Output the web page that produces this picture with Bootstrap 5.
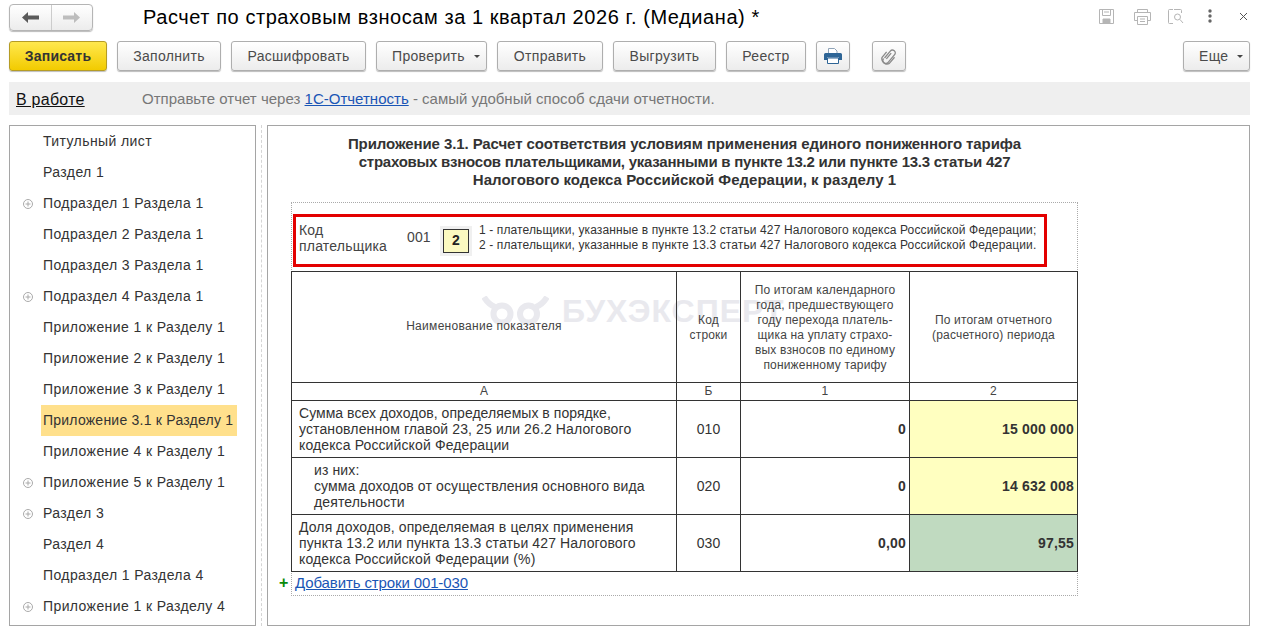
<!DOCTYPE html>
<html lang="ru">
<head>
<meta charset="utf-8">
<title>Расчет по страховым взносам</title>
<link href="https://cdn.jsdelivr.net/npm/bootstrap@5.3.0/dist/css/bootstrap.min.css" rel="stylesheet">
<style>
html,body{height:626px;overflow:hidden}
body{font-family:"Liberation Sans",Arial,sans-serif;font-size:14px;color:#333;background:#fff;padding:4px 13px 0 9px}
.head-row{height:26px;margin-bottom:11px}
.hist{width:84px;height:27px;border:1px solid #b5b5b5;border-radius:4px;background:linear-gradient(#fff,#ececec);box-shadow:0 1px 1px #bbb}
.hist span{flex:1;display:flex;align-items:center;justify-content:center}
.hist span+span{border-left:1px solid #ccc}
.doc-title{font-size:20px;line-height:26px;color:#000;margin-left:50px;letter-spacing:.57px}
.win-tools{margin-bottom:2px}
.tool-btn{height:30px;border:1px solid #aeaeae;border-radius:3px;background:linear-gradient(#fff,#ececec);box-shadow:0 1px 1px #bdbdbd;color:#4b4b4b;font-size:14px;letter-spacing:.32px;padding:0;display:flex;align-items:center;justify-content:center;flex:none;margin-left:10px}
.tool-btn.main-act{background:linear-gradient(#ffe84e,#f2cb00);border-color:#b59c25;color:#333;font-weight:700;width:98px;margin-left:0;letter-spacing:.2px}
.tool-btn.with-menu{justify-content:flex-start;padding-left:15px}
.caret-m{display:inline-block;width:0;height:0;border:3px solid transparent;border-top:3px solid #444;border-bottom:0;margin-left:9px}
.toolbar{height:30px;margin-bottom:11px}
.status-bar{height:33px;background:#efefef;padding:2px 0 0 7px;margin-bottom:10px}
.status-name{font-size:16px;color:#111;text-decoration:underline;width:126px;letter-spacing:.25px}
.status-note{color:#777;font-size:15px;letter-spacing:.01px;margin-top:-1px}
.status-note a,.add-link{color:#1a55b5}
.panels{height:501px}
.side{width:247px;border:1px solid #a5a5a5;flex:none;overflow:hidden}
.side-list{margin:0;padding:0;list-style:none}
.side-list li{height:31px;display:flex;align-items:center;padding-left:10px}
.tree-mark{width:12px;height:12px;flex:none;margin-left:2px;margin-right:9px}
.tree-gap{width:23px;flex:none}
.lbl{padding:0 4px 0 2px;height:31px;line-height:30px;margin-left:-2px;white-space:nowrap;color:#333;letter-spacing:.4px}
.lbl.sel{background:#ffe08c;letter-spacing:.23px}
.split{width:11px;flex:none;position:relative}
.split::after{content:"";position:absolute;left:5px;top:0;bottom:0;border-left:1px dashed #d5d5d5}
.sheet{flex:1;border:1px solid #a5a5a5;position:relative;overflow:hidden;padding:9px 0 0 23px}
.sheet-title{width:787px;font-weight:700;font-size:15px;letter-spacing:-.09px;text-align:center;line-height:18px;color:#333;margin-bottom:13px}
.sheet-title .ln-b{letter-spacing:-.25px}
.sheet-title .ln-c{letter-spacing:.02px}
.form-box{width:787px;height:394px;border:1px dotted #aaa;padding-top:11px;position:relative}
.red-box{width:754px;height:53px;border:3px solid #e30000;margin:0 0 4px 1px;display:flex;align-items:center;padding:0 0 6px 3px}
.payer{width:108px;line-height:16px;color:#444;letter-spacing:.2px}
.code-val{width:33px;color:#444;letter-spacing:.15px}
.cell-wrap{width:32px;height:30px;background:#f0f0f0;display:flex;align-items:center;justify-content:center;margin-right:7px;margin-top:6px}
.cell-wrap b{width:26px;height:24px;border:1px solid #333;background:#fbf9c0;display:flex;align-items:center;justify-content:center;font-size:14px;color:#222}
.notes{font-size:12px;line-height:15px;color:#333;white-space:nowrap;letter-spacing:.12px}
.report{width:786px;border-collapse:collapse;table-layout:fixed;position:relative;z-index:1;margin-left:-1px}
.report td{border:1px solid #333;padding:0 3px;text-align:center;vertical-align:middle;color:#444;font-size:12px;line-height:15px;background:transparent;letter-spacing:.18px}
.report td.head-cell{padding-top:2px}
.report td.head-name{padding-bottom:1px;letter-spacing:.3px}
.report tr.body-row td{font-size:14px;line-height:16px;height:57px;color:#333;letter-spacing:.12px}
.report tr.letters td{height:18px}
.report td.name{text-align:left;padding-left:7px}
.report td.name.ind{padding-left:22px}
.report tr.body-row td.num{text-align:right;font-weight:700;letter-spacing:.2px}
.report td.cell-y{background:#ffffc0}
.report td.cell-g{background:#c0dac0}
.tight-ln{letter-spacing:.04px}
.add-row{height:23px;line-height:22px;padding-left:3px}
.plus-sign{position:absolute;left:-13px;bottom:2px;color:#0a8a0a;font-weight:700;font-size:16px;line-height:20px}
.add-link{font-size:15px;letter-spacing:-.12px}
.wmark{position:absolute;left:190px;top:90px;z-index:0;color:#e9e9ee;font-size:32px;font-weight:700;display:flex;align-items:center;gap:13px;line-height:36px;pointer-events:none;letter-spacing:1px;white-space:nowrap}
</style>
</head>
<body>
<div class="d-flex align-items-center head-row">
  <div class="hist d-flex flex-none">
    <span><svg width="17" height="11" viewBox="0 0 17 11"><path d="M0 5.500 6 0v3.500h11v4H6V11z" fill="#5a5a5a"/></svg></span>
    <span><svg width="17" height="11" viewBox="0 0 17 11"><path d="M17 5.500 11 0v3.500H0v4h11V11z" fill="#bdbdbd"/></svg></span>
  </div>
  <div class="doc-title">Расчет по страховым взносам за 1 квартал 2026 г. (Медиана) *</div>
  <div class="ms-auto d-flex align-items-center win-tools">
    <svg width="17" height="17" viewBox="0 0 17 17" fill="none" stroke="#b5b5b5"><path d="M1.500 1.500h14v14h-14z"/><path d="M4.500 1.500v6h8v-6"/><path d="M6 4h5"/><path d="M5 11h7v4.500H5z" fill="#b5b5b5"/></svg>
    <svg style="margin-left:18px" width="19" height="17" viewBox="0 0 19 17" fill="none" stroke="#b5b5b5"><path d="M4.500 4.500v-3h10v3M1.500 4.500h16v8h-3M1.500 4.500v8h3"/><path d="M4.500 8.500h10v8h-10zM7 11h5M7 13.500h5"/></svg>
    <svg style="margin-left:15px" width="18" height="17" viewBox="0 0 18 17" fill="none" stroke="#b5b5b5"><path d="M6 1.500H2.500q-1 0-1 1v12q0 1 1 1H6M7 1.500h6.500q1 0 1 1V5"/><circle cx="10.500" cy="9" r="3"/><path d="m13 11.500 3 3.500"/></svg>
    <svg style="margin-left:23px" width="4" height="14" viewBox="0 0 4 14" fill="#666"><circle cx="2" cy="2" r="1.700"/><circle cx="2" cy="7" r="1.700"/><circle cx="2" cy="12" r="1.700"/></svg>
    <svg style="margin-left:27px;margin-right:2px" width="9" height="9" viewBox="0 0 9 9" stroke="#555" fill="none"><path d="m1 1 7 7M8 1 1 8"/></svg>
  </div>
</div>
<div class="d-flex toolbar">
  <button class="tool-btn main-act" type="button">Записать</button>
  <button class="tool-btn" style="width:104px" type="button">Заполнить</button>
  <button class="tool-btn" style="width:135px" type="button">Расшифровать</button>
  <button class="tool-btn with-menu" style="width:111px" type="button">Проверить<i class="caret-m"></i></button>
  <button class="tool-btn" style="width:106px" type="button">Отправить</button>
  <button class="tool-btn" style="width:103px" type="button">Выгрузить</button>
  <button class="tool-btn" style="width:80px" type="button">Реестр</button>
  <button class="tool-btn" style="width:34px" type="button" aria-label="Печать"><svg width="18" height="16" viewBox="0 0 18 16"><path d="M4.500 6V.5h6l2.500 2.500v3z" fill="#fff" stroke="#8fa3b8"/><path d="M0 6.500q0-1.500 1.500-1.500h15q1.500 0 1.500 1.500V12h-3V9.500H3V12H0z" fill="#2e6596"/><path d="M3.500 10h11v5.500h-11z" fill="#fff" stroke="#2e6596"/></svg></button>
  <button class="tool-btn" style="width:34px;margin-left:22px" type="button" aria-label="Вложение"><svg width="16" height="17" viewBox="-8 -8.500 16 17" fill="none" stroke="#8a8a8a" stroke-width="1.300"><g transform="rotate(40)"><path d="M-2.500 4V-5a2.800 2.800 0 0 1 5.600 0V5a3 3 0 0 1-6 0M-.5-4V3.500"/><path d="M4.700-3V5a5 4.500 0 0 1-9.500 0V-2"/></g></svg></button>
  <button class="tool-btn with-menu ms-auto" style="width:67px" type="button">Еще<i class="caret-m"></i></button>
</div>
<div class="status-bar d-flex align-items-center">
  <div class="status-name">В работе</div>
  <div class="status-note">Отправьте отчет через <a href="#">1С-Отчетность</a> - самый удобный способ сдачи отчетности.</div>
</div>
<div class="d-flex panels">
  <div class="side">
    <ul class="side-list">
      <li><i class="tree-gap"></i><span class="lbl">Титульный лист</span></li>
      <li><i class="tree-gap"></i><span class="lbl">Раздел 1</span></li>
      <li><svg class="tree-mark" viewBox="0 0 12 12" fill="none" stroke="#aaa"><circle cx="6" cy="6" r="4.500"/><path d="M3.500 6h5M6 3.500v5"/></svg><span class="lbl">Подраздел 1 Раздела 1</span></li>
      <li><i class="tree-gap"></i><span class="lbl">Подраздел 2 Раздела 1</span></li>
      <li><i class="tree-gap"></i><span class="lbl">Подраздел 3 Раздела 1</span></li>
      <li><svg class="tree-mark" viewBox="0 0 12 12" fill="none" stroke="#aaa"><circle cx="6" cy="6" r="4.500"/><path d="M3.500 6h5M6 3.500v5"/></svg><span class="lbl">Подраздел 4 Раздела 1</span></li>
      <li><i class="tree-gap"></i><span class="lbl">Приложение 1 к Разделу 1</span></li>
      <li><i class="tree-gap"></i><span class="lbl">Приложение 2 к Разделу 1</span></li>
      <li><i class="tree-gap"></i><span class="lbl">Приложение 3 к Разделу 1</span></li>
      <li><i class="tree-gap"></i><span class="lbl sel">Приложение 3.1 к Разделу 1</span></li>
      <li><i class="tree-gap"></i><span class="lbl">Приложение 4 к Разделу 1</span></li>
      <li><svg class="tree-mark" viewBox="0 0 12 12" fill="none" stroke="#aaa"><circle cx="6" cy="6" r="4.500"/><path d="M3.500 6h5M6 3.500v5"/></svg><span class="lbl">Приложение 5 к Разделу 1</span></li>
      <li><svg class="tree-mark" viewBox="0 0 12 12" fill="none" stroke="#aaa"><circle cx="6" cy="6" r="4.500"/><path d="M3.500 6h5M6 3.500v5"/></svg><span class="lbl">Раздел 3</span></li>
      <li><i class="tree-gap"></i><span class="lbl">Раздел 4</span></li>
      <li><i class="tree-gap"></i><span class="lbl">Подраздел 1 Раздела 4</span></li>
      <li><svg class="tree-mark" viewBox="0 0 12 12" fill="none" stroke="#aaa"><circle cx="6" cy="6" r="4.500"/><path d="M3.500 6h5M6 3.500v5"/></svg><span class="lbl">Приложение 1 к Разделу 4</span></li>
    </ul>
  </div>
  <div class="split"></div>
  <div class="sheet">
    <div class="sheet-title">Приложение 3.1. Расчет соответствия условиям применения единого пониженного тарифа<br><span class="ln-b">страховых взносов плательщиками, указанными в пункте 13.2 или пункте 13.3 статьи 427</span><br><span class="ln-c">Налогового кодекса Российской Федерации, к разделу 1</span></div>
    <div class="form-box">
      <div class="wmark"><svg width="67" height="30" viewBox="0 0 67 30" fill="none" stroke="#e9e9ee" stroke-width="6"><circle cx="20" cy="18" r="8.500"/><circle cx="46.500" cy="18" r="8.500"/><path d="M2 1q4 7 11 10M65 1q-4 7-11 10"/></svg><span>БУХЭКСПЕРТ</span></div>
      <div class="red-box">
        <div class="payer">Код<br>плательщика</div>
        <div class="code-val">001</div>
        <div class="cell-wrap"><b>2</b></div>
        <div class="notes">1 - плательщики, указанные в пункте 13.2 статьи 427 Налогового кодекса Российской Федерации;<br>2 - плательщики, указанные в пункте 13.3 статьи 427 Налогового кодекса Российской Федерации.</div>
      </div>
      <table class="report">
        <colgroup><col style="width:385px"><col style="width:64px"><col style="width:169px"><col style="width:168px"></colgroup>
        <tr><td class="head-name" style="height:111px">Наименование показателя</td><td class="head-cell">Код<br>строки</td><td class="head-cell">По итогам календарного<br>года, предшествующего<br>году перехода платель-<br>щика на уплату страхо-<br>вых взносов по единому<br>пониженному тарифу</td><td class="head-cell">По итогам отчетного<br>(расчетного) периода</td></tr>
        <tr class="letters"><td>А</td><td>Б</td><td>1</td><td>2</td></tr>
        <tr class="body-row"><td class="name"><span class="tight-ln">Сумма всех доходов, определяемых в порядке,</span><br>установленном главой 23, 25 или 26.2 Налогового<br>кодекса Российской Федерации</td><td>010</td><td class="num">0</td><td class="num cell-y">15 000 000</td></tr>
        <tr class="body-row"><td class="name ind">из них:<br>сумма доходов от осуществления основного вида<br>деятельности</td><td>020</td><td class="num">0</td><td class="num cell-y">14 632 008</td></tr>
        <tr class="body-row"><td class="name">Доля доходов, определяемая в целях применения<br>пункта 13.2 или пункта 13.3 статьи 427 Налогового<br>кодекса Российской Федерации (%)</td><td>030</td><td class="num">0,00</td><td class="num cell-g">97,55</td></tr>
      </table>
      <div class="add-row"><span class="plus-sign">+</span><a class="add-link" href="#">Добавить строки 001-030</a></div>
    </div>
  </div>
</div>
<script src="https://cdn.jsdelivr.net/npm/bootstrap@5.3.0/dist/js/bootstrap.bundle.min.js"></script>
</body>
</html>
